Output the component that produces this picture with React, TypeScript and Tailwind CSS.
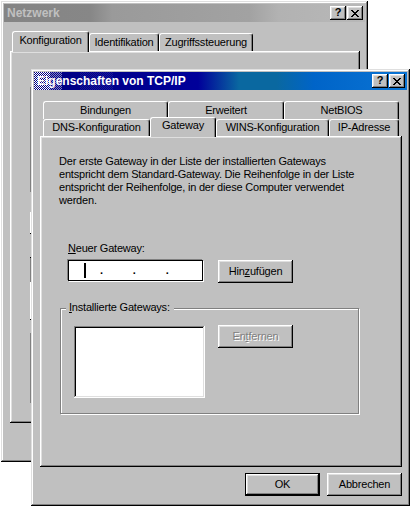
import React from 'react';
import clsx from 'clsx';

// win98 bevels
const frame = 'shadow-[inset_-1px_-1px_#000,inset_1px_1px_#dfdfdf,inset_-2px_-2px_#808080,inset_2px_2px_#fff]';
const raised = 'shadow-[inset_-1px_-1px_#000,inset_1px_1px_#fff,inset_-2px_-2px_#808080,inset_2px_2px_#dfdfdf]';
const sunken = 'shadow-[inset_-1px_-1px_#fff,inset_1px_1px_#808080,inset_-2px_-2px_#dfdfdf,inset_2px_2px_#000]';
const checker = 'bg-[repeating-conic-gradient(#fff_0%_25%,transparent_0%_50%)] bg-[length:2px_2px]';

function CloseGlyph() {
  return (
    <svg width="8" height="7" viewBox="0 0 8 7" shapeRendering="crispEdges">
      <path
        fill="#000"
        d="M0 0h2v1H0zM6 0h2v1H6zM1 1h2v1H1zM5 1h2v1H5zM2 2h4v1H2zM3 3h2v1H3zM2 4h4v1H2zM1 5h2v1H1zM5 5h2v1H5zM0 6h2v1H0zM6 6h2v1H6z"
      />
    </svg>
  );
}

function CaptionButtons() {
  return (
    <div className="relative flex items-center gap-[1px] pr-[2px]">
      <div className={`w-[16px] h-[14px] bg-[#c0c0c0] flex items-center justify-center ${raised}`}>
        <span className="text-[11px] leading-none font-bold tracking-normal -mt-[1px]">?</span>
      </div>
      <div className={`w-[16px] h-[14px] bg-[#c0c0c0] flex items-center justify-center ${raised}`}>
        <CloseGlyph />
      </div>
    </div>
  );
}

function Tab({
  w,
  h,
  pt,
  active,
  children,
}: {
  w: string;
  h: string;
  pt: string;
  active?: boolean;
  children: React.ReactNode;
}) {
  return (
    <div
      className={clsx(
        w,
        h,
        pt,
        'flex justify-center whitespace-nowrap bg-[#c0c0c0] border-l border-t border-white border-r border-r-black rounded-t-[3px] shadow-[inset_-1px_0_#808080]',
        active && 'relative z-10 -mt-[2px] -mb-[1px]'
      )}
    >
      {children}
    </div>
  );
}

function Button({
  className,
  isDefault,
  disabled,
  children,
}: {
  className?: string;
  isDefault?: boolean;
  disabled?: boolean;
  children: React.ReactNode;
}) {
  return (
    <div
      className={clsx(
        'w-[75px] h-[23px] flex items-center justify-center bg-[#c0c0c0] whitespace-nowrap',
        isDefault ? 'border border-black' : '',
        raised,
        disabled && 'text-[#808080] [text-shadow:1px_1px_0_#fff]',
        className
      )}
    >
      <span>{children}</span>
    </div>
  );
}

export default function App() {
  return (
    <div className="relative w-[411px] h-[507px] overflow-hidden bg-white font-['Liberation_Sans',Arial,sans-serif] text-[11px] leading-[13px] tracking-[-0.2px] text-black select-none">
      {/* Netzwerk - inactive window behind */}
      <div className={`absolute left-[1px] top-[1px] w-[367px] h-[461px] bg-[#c0c0c0] p-[3px] flex flex-col ${frame}`}>
        <div className="h-[18px] flex items-center justify-between bg-[linear-gradient(90deg,#848484,#878787_24%,#9a9a9a_30%,#a2a2a2_68%,#b2b2b2_76%,#b8b8b8)]">
          <span className="pl-[3px] text-[12px] leading-[14px] tracking-normal font-bold text-[#c0c0c0]">Netzwerk</span>
          <CaptionButtons />
        </div>

        <div className="ml-[8px] mt-[11px] flex h-[18px] items-start">
          <Tab w="w-[77px]" h="h-[21px]" pt="pt-[2px]" active>
            Konfiguration
          </Tab>
          <Tab w="w-[70px]" h="h-[18px]" pt="pt-[2px]">
            Identifikation
          </Tab>
          <Tab w="w-[94px]" h="h-[18px]" pt="pt-[2px]">
            Zugriffssteuerung
          </Tab>
        </div>

        <div className={`relative ml-[6px] w-[350px] h-[372px] bg-[#c0c0c0] ${raised}`}>
          {/* edges of the controls hidden behind the front dialog */}
          <svg className="absolute left-[20px] top-[36px]" width="1" height="316" shapeRendering="crispEdges">
            <rect x="0" y="0" width="1" height="105" fill="#808080" />
            <rect x="0" y="125" width="1" height="21" fill="#fff" />
            <rect x="0" y="146" width="1" height="1" fill="#000" />
            <rect x="0" y="170" width="1" height="1" fill="#000" />
            <rect x="0" y="171" width="1" height="24" fill="#808080" />
            <rect x="0" y="195" width="1" height="37" fill="#fff" />
            <rect x="0" y="232" width="1" height="1" fill="#000" />
            <rect x="0" y="246" width="1" height="70" fill="#808080" />
          </svg>
        </div>
      </div>

      {/* Eigenschaften von TCP/IP - active dialog */}
      <div className={`absolute left-[31px] top-[69px] w-[379px] h-[437px] bg-[#c0c0c0] p-[3px] flex flex-col ${frame}`}>
        <div className="relative h-[18px] flex items-center justify-between overflow-hidden bg-[linear-gradient(90deg,#000080,#00009a_44%,#0a68a0_55%,#0a68a0_65%,#0064c8_75%,#0a74d4)]">
          <span className="relative pl-[3px] text-[12px] leading-[14px] tracking-normal font-bold text-white whitespace-nowrap">
            Eigenschaften von TCP/IP
          </span>
          <div className={`absolute left-0 top-0 h-full w-[16px] ${checker}`} />
          <div className={`absolute left-[16px] top-0 h-full w-[12px] opacity-50 ${checker}`} />
          <div className={`absolute left-[46px] top-0 h-full w-[33px] opacity-10 ${checker}`} />
          <CaptionButtons />
        </div>

        <div className="ml-[9px] mt-[11px] flex flex-col">
          <div className="flex h-[18px]">
            <Tab w="w-[125px]" h="h-[18px]" pt="pt-[2px]">
              Bindungen
            </Tab>
            <Tab w="w-[116px]" h="h-[18px]" pt="pt-[2px]">
              Erweitert
            </Tab>
            <Tab w="w-[115px]" h="h-[18px]" pt="pt-[2px]">
              NetBIOS
            </Tab>
          </div>
          <div className="flex h-[17px] items-start">
            <Tab w="w-[107px]" h="h-[17px]" pt="pt-[1px]">
              DNS-Konfiguration
            </Tab>
            <Tab w="w-[66px]" h="h-[20px]" pt="pt-[1px]" active>
              Gateway
            </Tab>
            <Tab w="w-[113px]" h="h-[17px]" pt="pt-[1px]">
              WINS-Konfiguration
            </Tab>
            <Tab w="w-[70px]" h="h-[17px]" pt="pt-[1px]">
              IP-Adresse
            </Tab>
          </div>
        </div>

        <div className={`ml-[6px] w-[362px] h-[331px] bg-[#c0c0c0] flex flex-col items-start ${raised}`}>
          <p className="pt-[19px] pl-[19px] whitespace-nowrap">
            Der erste Gateway in der Liste der installierten Gateways
            <br />
            entspricht dem Standard-Gateway. Die Reihenfolge in der Liste
            <br />
            entspricht der Reihenfolge, in der diese Computer verwendet
            <br />
            werden.
          </p>

          <div className="mt-[35px] ml-[28px]">
            <span className="underline underline-offset-[1px]">N</span>euer Gateway:
          </div>

          <div className="mt-[5px] ml-[28px] flex items-start">
            <div className="w-[135px] h-[21px] bg-white border border-black shadow-[-1px_-1px_0_#808080,1px_1px_0_#fff] flex items-center">
              <div className="ml-[15px] w-[2px] h-[15px] bg-black" />
              <span className="ml-[14px] font-bold">.</span>
              <span className="ml-[30px] font-bold">.</span>
              <span className="ml-[30px] font-bold">.</span>
            </div>
            <Button className="ml-[15px]">
              Hin<span className="underline underline-offset-[1px]">z</span>ufügen
            </Button>
          </div>

          <div className="relative mt-[25px] ml-[20px] w-[299px] h-[106px] border border-[#808080] shadow-[inset_1px_1px_#fff,1px_1px_#fff] flex items-start pl-[13px] pt-[17px]">
            <span className="absolute left-[5px] -top-[8px] bg-[#c0c0c0] pl-[3px] pr-[4px] whitespace-nowrap">
              <span className="underline underline-offset-[1px]">I</span>nstallierte Gateways:
            </span>
            <div className={`w-[131px] h-[72px] bg-white ${sunken}`} />
            <Button className="ml-[13px] -mt-[1px]" disabled>
              En<span className="underline underline-offset-[1px]">t</span>fernen
            </Button>
          </div>
        </div>

        <div className="mt-[6px] ml-[6px] w-[362px] flex justify-end gap-[7px]">
          <Button isDefault>OK</Button>
          <Button>Abbrechen</Button>
        </div>
      </div>
    </div>
  );
}
